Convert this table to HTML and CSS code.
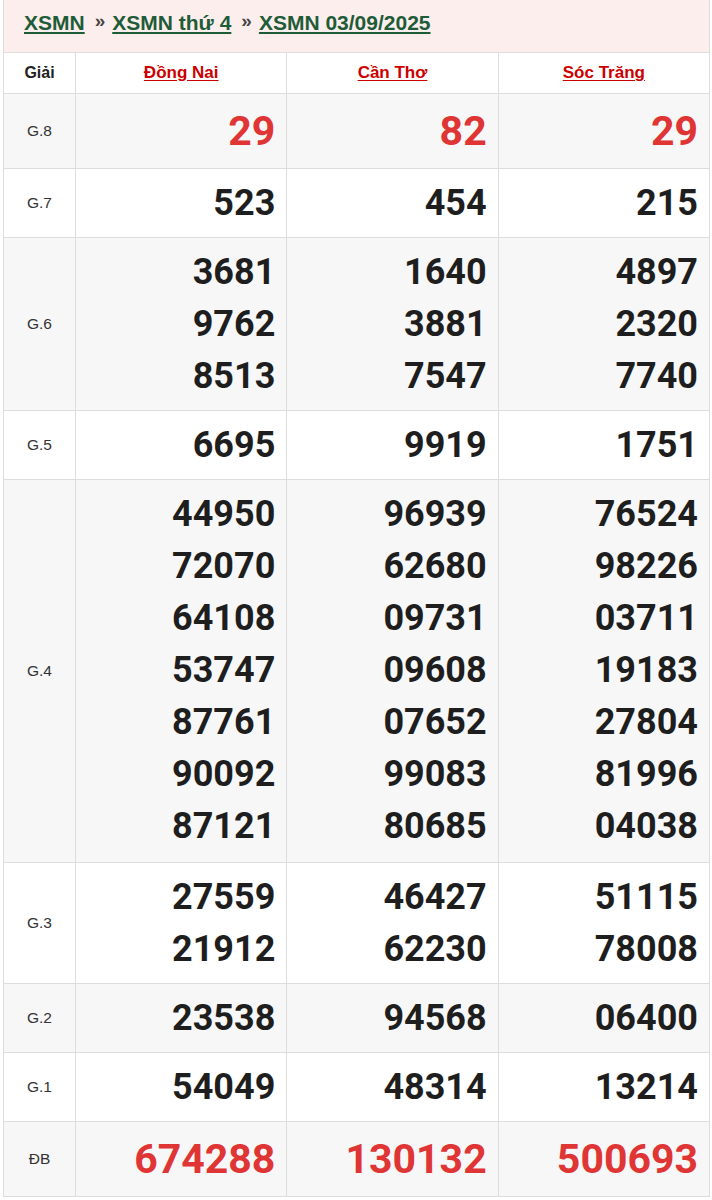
FILE: index.html
```html
<!DOCTYPE html>
<html lang="vi">
<head>
<meta charset="utf-8">
<title>XSMN 03/09/2025</title>
<link rel="stylesheet" href="styles.css">
</head>
<body>
<div class="page">
  <div class="crumbs">
    <a href="#">XSMN</a><span class="sep">»</span><a href="#">XSMN thứ 4</a><span class="sep">»</span><a href="#">XSMN 03/09/2025</a>
  </div>
  <table class="results">
    <colgroup><col class="c-label"><col class="c-prov"><col class="c-prov"><col class="c-prov"></colgroup>
    <thead>
      <tr><th class="label">Giải</th><th><a href="#">Đồng Nai</a></th><th><a href="#">Cần Thơ</a></th><th><a href="#">Sóc Trăng</a></th></tr>
    </thead>
    <tbody>
      <tr class="alt big"><td class="label">G.8</td><td><div>29</div></td><td><div>82</div></td><td><div>29</div></td></tr>
      <tr><td class="label">G.7</td><td><div>523</div></td><td><div>454</div></td><td><div>215</div></td></tr>
      <tr class="alt"><td class="label">G.6</td><td><div>3681</div><div>9762</div><div>8513</div></td><td><div>1640</div><div>3881</div><div>7547</div></td><td><div>4897</div><div>2320</div><div>7740</div></td></tr>
      <tr><td class="label">G.5</td><td><div>6695</div></td><td><div>9919</div></td><td><div>1751</div></td></tr>
      <tr class="alt tall"><td class="label">G.4</td>
        <td><div>44950</div><div>72070</div><div>64108</div><div>53747</div><div>87761</div><div>90092</div><div>87121</div></td>
        <td><div>96939</div><div>62680</div><div>09731</div><div>09608</div><div>07652</div><div>99083</div><div>80685</div></td>
        <td><div>76524</div><div>98226</div><div>03711</div><div>19183</div><div>27804</div><div>81996</div><div>04038</div></td></tr>
      <tr><td class="label">G.3</td><td><div>27559</div><div>21912</div></td><td><div>46427</div><div>62230</div></td><td><div>51115</div><div>78008</div></td></tr>
      <tr class="alt"><td class="label">G.2</td><td><div>23538</div></td><td><div>94568</div></td><td><div>06400</div></td></tr>
      <tr><td class="label">G.1</td><td><div>54049</div></td><td><div>48314</div></td><td><div>13214</div></td></tr>
      <tr class="alt big"><td class="label">ĐB</td><td><div>674288</div></td><td><div>130132</div></td><td><div>500693</div></td></tr>
    </tbody>
  </table>
</div>
</body>
</html>
```
FILE: styles.css
```css
html, body {
  margin: 0;
  padding: 0;
  background: #fff;
}
body {
  font-family: "Liberation Sans", Arial, sans-serif;
  color: #222;
}
.page {
  margin-left: 3px;
  width: 707px;
}
.crumbs {
  background: #fdeeee;
  border-left: 1px solid #ddd;
  border-right: 1px solid #ddd;
  height: 52px;
  box-sizing: border-box;
  padding: 10px 0 0 20px;
  font-size: 21px;
  font-weight: bold;
  line-height: 26px;
}
.crumbs a {
  color: #1e5c37;
  text-decoration: underline;
  text-decoration-thickness: 2px;
  text-underline-offset: 2px;
}
.crumbs .sep {
  color: #444;
  font-size: 19px;
  margin: 0 7px 0 10px;
  position: relative;
  top: -3px;
}
.results {
  width: 707px;
  border-collapse: collapse;
  table-layout: fixed;
}
.c-label { width: 72px; }
.results th, .results td {
  border: 1px solid #ddd;
}
.results th {
  padding: 8px 0;
  height: 24px;
  line-height: 24px;
  font-size: 17px;
  font-weight: bold;
  text-align: center;
  background: #fff;
}
.results th a {
  color: #cc0000;
  text-decoration: underline;
  text-underline-offset: 2px;
}
.results th.label {
  color: #222;
  font-size: 16px;
}
.results td {
  padding: 8px 11px 8px 0;
  text-align: right;
  font-family: Roboto, "Liberation Sans", Arial, sans-serif;
  font-weight: bold;
  font-size: 36px;
  line-height: 52px;
  color: #1e1e1e;
}
.results tr.tall td:not(.label) {
  padding-bottom: 10px;
}
.results td.label {
  padding: 0;
  text-align: center;
  font-family: "Liberation Sans", Arial, sans-serif;
  font-weight: normal;
  font-size: 15.5px;
  line-height: 20px;
  color: #333;
}
.results tr.alt td {
  background: #f7f7f7;
}
.results tr.big td {
  font-size: 41px;
  line-height: 58px;
  color: #e03535;
}
.results tr.big td.label {
  font-size: 15.5px;
  line-height: 20px;
  color: #333;
}
```
